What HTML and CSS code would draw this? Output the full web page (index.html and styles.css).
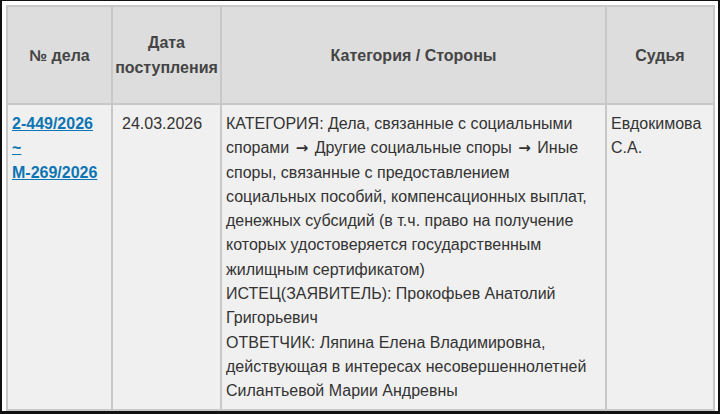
FILE: index.html
```html
<!DOCTYPE html>
<html lang="ru">
<head>
<meta charset="utf-8">
<link rel="stylesheet" href="styles.css">
</head>
<body>
<div class="frame">
  <table class="cases">
    <colgroup>
      <col class="c-num">
      <col class="c-date">
      <col class="c-cat">
      <col class="c-judge">
    </colgroup>
    <thead>
      <tr>
        <th>№ дела</th>
        <th>Дата<br>поступления</th>
        <th>Категория / Стороны</th>
        <th>Судья</th>
      </tr>
    </thead>
    <tbody>
      <tr>
        <td class="num"><a href="#">2-449/2026<br>~<br>М-269/2026</a></td>
        <td class="date">24.03.2026</td>
        <td class="cat">КАТЕГОРИЯ: Дела, связанные с социальными спорами <span class="arr">→</span> Другие социальные споры <span class="arr">→</span> Иные споры, связанные с предоставлением социальных пособий, компенсационных выплат, денежных субсидий (в т.ч. право на получение которых удостоверяется государственным жилищным сертификатом)<br>ИСТЕЦ(ЗАЯВИТЕЛЬ): Прокофьев Анатолий Григорьевич<br>ОТВЕТЧИК: Ляпина Елена Владимировна, действующая в интересах несовершеннолетней Силантьевой Марии Андревны</td>
        <td class="judge">Евдокимова С.А.</td>
      </tr>
    </tbody>
  </table>
</div>
</body>
</html>
```

FILE: styles.css
```css
html, body {
  margin: 0;
  padding: 0;
  background: #ffffff;
}
body {
  width: 720px;
  height: 414px;
  overflow: hidden;
  font-family: "Liberation Sans", Arial, sans-serif;
}
.frame {
  box-sizing: border-box;
  width: 720px;
  height: 414px;
  border-style: solid;
  border-color: #111111;
  border-width: 1px 2px 3px 2px;
  padding: 4px 3px 0 4px;
  background: #ffffff;
  overflow: hidden;
}
.cases {
  border-collapse: collapse;
  table-layout: fixed;
  width: 709px;
}
.c-num { width: 105px; }
.c-date { width: 109px; }
.c-cat { width: 385px; }
.c-judge { width: 108px; }
.cases th,
.cases td {
  border: 2px solid #c8c8c8;
}
.cases th {
  background: #dddddd;
  color: #444444;
  font-weight: bold;
  font-size: 16px;
  line-height: 25px;
  height: 96px;
  padding: 0;
  text-align: center;
  vertical-align: middle;
}
.cases td {
  background: #f0f0f0;
  color: #333333;
  font-size: 16px;
  line-height: 24.3px;
  vertical-align: top;
  padding: 7px 4px 5px 4px;
}
.cases td.date {
  padding-left: 9px;
}
.arr {
  display: inline-block;
  margin: 0 2px;
  font-family: "DejaVu Sans", sans-serif;
  font-weight: bold;
  font-size: 15px;
  line-height: 1;
}
.num a {
  color: #0d75b3;
  font-weight: bold;
  text-decoration: underline;
}
```
